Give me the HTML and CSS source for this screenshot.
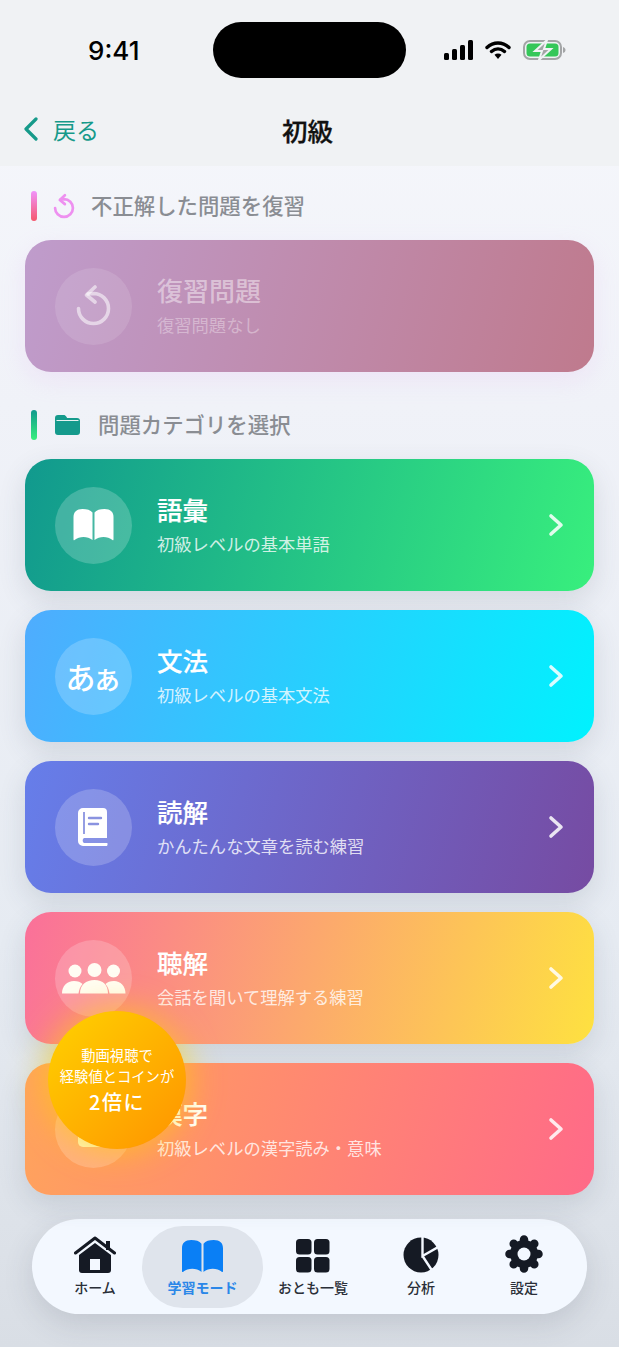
FILE: index.html
```html
<!DOCTYPE html>
<html lang="ja">
<head>
    <meta charset="UTF-8">
    <meta name="viewport" content="width=device-width, initial-scale=1.0">
    <title>初級</title>
    <link rel="stylesheet" href="styles.css">
</head>
<body>
    <header class="header">
        <div class="status-bar">
            <span class="time">9:41</span>
            <div class="island"></div>
            <div class="status-icons">
                <svg width="30" height="20" viewBox="0 0 30 20"><rect x="0" y="13" width="5" height="7" rx="1.5"/><rect x="8" y="9" width="5" height="11" rx="1.5"/><rect x="16" y="5" width="5" height="15" rx="1.5"/><rect x="24" y="0" width="5" height="20" rx="1.5"/></svg>
                <svg class="wifi" width="26" height="20" viewBox="0 0 26 20"><path d="M2 7.500C8.500 1.500 17.500 1.500 24 7.500M6.500 11.500C10.500 8 15.500 8 19.500 11.500" fill="none" stroke="#000" stroke-width="3.400" stroke-linecap="round"/><path d="M9.500 14.800C11.500 13 14.500 13 16.500 14.800L13 19Z"/></svg>
                <svg class="battery" width="43" height="22" viewBox="0 0 43 22"><rect x="1" y="2" width="37" height="18" rx="6" fill="none" stroke="#a3a5a6" stroke-width="2"/><rect x="3.500" y="4.500" width="32" height="13" rx="3.500" fill="#35c759"/><path d="M40 8v6c1.500-.5 2.500-1.500 2.500-3S41.500 8.500 40 8Z" fill="#a3a5a6"/><path d="M24 1 12 12h7L16 21 28 10h-7Z" fill="#a3a5a6" stroke="#f0f2f4" stroke-width="2"/></svg>
            </div>
        </div>
        <nav class="nav">
            <a class="back">
                <svg width="16" height="24" viewBox="0 0 16 24"><path d="M13 2 3 12l10 10" fill="none" stroke="#169a8a" stroke-width="3.200" stroke-linecap="round" stroke-linejoin="round"/></svg>
                <span>戻る</span>
            </a>
            <h1 class="nav-title">初級</h1>
            <span></span>
        </nav>
    </header>

    <main class="main">
        <div class="section-head">
            <span class="section-bar bar-pink"></span>
            <svg class="retry-small" width="22" height="27" viewBox="0 0 37 42"><path d="M13 9 18.500 8.500A15 15 0 1 1 3.500 23.500" fill="none" stroke="#ee90f0" stroke-width="4.500" stroke-linecap="round"/><path d="M20 2 11.500 10 20 17" fill="none" stroke="#ee90f0" stroke-width="4.500" stroke-linecap="round" stroke-linejoin="round"/></svg>
            <h2>不正解した問題を復習</h2>
        </div>
        <div class="card card-review">
            <div class="card-icon">
                <svg width="37" height="42" viewBox="0 0 37 42"><path d="M13 9 18.500 8.500A15 15 0 1 1 3.500 23.500" fill="none" stroke="#fff" stroke-opacity=".55" stroke-width="3.600" stroke-linecap="round"/><path d="M20 2 11.500 10 20 17" fill="none" stroke="#fff" stroke-opacity=".55" stroke-width="3.600" stroke-linecap="round" stroke-linejoin="round"/></svg>
            </div>
            <div class="card-text">
                <div class="card-title">復習問題</div>
                <div class="card-sub">復習問題なし</div>
            </div>
        </div>

        <div class="section-head section-second">
            <span class="section-bar bar-green"></span>
            <svg class="folder" width="25" height="20" viewBox="0 0 25 20"><path d="M0 3a3 3 0 0 1 3-3h5.500c1.200 0 1.800.5 2.500 1.300L12.200 3H22a3 3 0 0 1 3 3v11a3 3 0 0 1-3 3H3a3 3 0 0 1-3-3Z" fill="#159a8c"/><path d="M1.500 5.500H23.500" stroke="#e6f2f1" stroke-width="1"/></svg>
            <h2>問題カテゴリを選択</h2>
        </div>
        <div class="cards">
            <div class="card card-vocab">
                <div class="card-icon">
                    <svg width="41" height="32" viewBox="0 0 40 32"><path d="M0 8C0 3 3 0 9 0c4.500 0 8 1 10 3.500V31c-5-4-13-4-18 0-.7.600-1 0-1-1ZM21 3.500C23 1 26.500 0 31 0c6 0 9 3 9 8v22c0 1-.3 1.600-1 1-5-4-13-4-18 0Z" fill="#fff"/></svg>
                </div>
                <div class="card-text">
                    <div class="card-title">語彙</div>
                    <div class="card-sub">初級レベルの基本単語</div>
                </div>
                <svg class="chevron" width="16" height="24" viewBox="0 0 16 24"><path d="M3 3l10 9-10 9"/></svg>
            </div>
            <div class="card card-grammar">
                <div class="card-icon"><span class="kana">あぁ</span></div>
                <div class="card-text">
                    <div class="card-title">文法</div>
                    <div class="card-sub">初級レベルの基本文法</div>
                </div>
                <svg class="chevron" width="16" height="24" viewBox="0 0 16 24"><path d="M3 3l10 9-10 9"/></svg>
            </div>
            <div class="card card-reading">
                <div class="card-icon">
                    <svg class="book-icon" width="30" height="38" viewBox="0 0 30 38"><path d="M5 0h20a4 4 0 0 1 4 4v26H6a3 3 0 0 0 0 5h23c.8 0 .8 2 0 3H5a5 5 0 0 1-5-5V5a5 5 0 0 1 5-5Z" fill="#fff"/><path d="M6 4V26" stroke="#8a93e0" stroke-width="1.800"/><path d="M11 10H23M11 16H20" stroke="#8a93e0" stroke-width="2.400" stroke-linecap="round"/></svg>
                </div>
                <div class="card-text">
                    <div class="card-title">読解</div>
                    <div class="card-sub">かんたんな文章を読む練習</div>
                </div>
                <svg class="chevron" width="16" height="24" viewBox="0 0 16 24"><path d="M3 3l10 9-10 9"/></svg>
            </div>
            <div class="card card-listening">
                <div class="card-icon">
                    <svg width="64" height="31" viewBox="0 0 64 31" fill="#fffdf4"><circle cx="13" cy="8" r="6.500"/><circle cx="32.500" cy="7" r="7"/><circle cx="51.500" cy="8" r="6.500"/><path d="M0 30.500C0 23 5 18 12 18c4 0 6.500 1 8.500 3C18 24 17 27 16.500 30.500ZM63.500 30.500C63.500 23 58.500 18 52 18c-4 0-6.500 1-8.500 3 2.500 3 3.500 6 4 9.500ZM18 30.500C18 22 24 17 32.500 17S46 22 46 30.500Z"/></svg>
                </div>
                <div class="card-text">
                    <div class="card-title">聴解</div>
                    <div class="card-sub">会話を聞いて理解する練習</div>
                </div>
                <svg class="chevron" width="16" height="24" viewBox="0 0 16 24"><path d="M3 3l10 9-10 9"/></svg>
            </div>
            <div class="card card-kanji">
                <div class="card-icon">
                    <svg width="31" height="35" viewBox="0 0 31 35"><rect width="31" height="35" rx="5" fill="#fff3c4"/></svg>
                </div>
                <div class="card-text">
                    <div class="card-title">漢字</div>
                    <div class="card-sub">初級レベルの漢字読み・意味</div>
                </div>
                <svg class="chevron" width="16" height="24" viewBox="0 0 16 24"><path d="M3 3l10 9-10 9"/></svg>
            </div>
            <div class="bonus">
                <span>動画視聴で</span>
                <span>経験値とコインが</span>
                <strong>2倍に</strong>
            </div>
        </div>

        <div class="tabbar">
            <div class="tab tab-home">
                <svg width="42" height="37" viewBox="0 0 42 37"><rect x="32" y="5" width="4" height="9" fill="#151a24"/><path d="M5 19 21 7l16 12v15a3 3 0 0 1-3 3H8a3 3 0 0 1-3-3ZM16 23v11h10V23Z" fill="#151a24" fill-rule="evenodd"/><path d="M1.500 17 21 2l19.500 15" fill="none" stroke="#151a24" stroke-width="3" stroke-linecap="round" stroke-linejoin="round"/></svg>
                <span>ホーム</span>
            </div>
            <div class="tab tab-study active">
                <svg width="41" height="33" viewBox="0 0 40 32"><path d="M0 8C0 3 3 0 9 0c4.500 0 8 1 10 3.500V31c-5-4-13-4-18 0-.7.600-1 0-1-1ZM21 3.500C23 1 26.500 0 31 0c6 0 9 3 9 8v22c0 1-.3 1.600-1 1-5-4-13-4-18 0Z" fill="#0a7ff5"/></svg>
                <span>学習モード</span>
            </div>
            <div class="tab tab-list">
                <svg width="34" height="34" viewBox="0 0 34 34" fill="#151a24"><rect x="0" y="0" width="15.500" height="15.500" rx="3.500"/><rect x="18" y="0" width="15.500" height="15.500" rx="3.500"/><rect x="0" y="18" width="15.500" height="15.500" rx="3.500"/><rect x="18" y="18" width="15.500" height="15.500" rx="3.500"/></svg>
                <span>おとも一覧</span>
            </div>
            <div class="tab tab-stats">
                <svg width="36" height="36" viewBox="0 0 36 36"><circle cx="18" cy="18" r="17.500" fill="#151a24"/><path d="M19.500 0 19.500 19 36 9.500M19.500 19 30 35" fill="none" stroke="#f3f8ff" stroke-width="2.400"/></svg>
                <span>分析</span>
            </div>
            <div class="tab tab-settings">
                <svg width="38" height="38" viewBox="0 0 38 38"><g stroke="#151a24" stroke-width="8.500" stroke-linecap="round"><path d="M19 4.500V33.500M4.500 19H33.500M8.700 8.700 29.300 29.300M29.300 8.700 8.700 29.300"/></g><circle cx="19" cy="19" r="14" fill="#151a24"/><circle cx="19" cy="19" r="6.500" fill="#f3f8ff"/></svg>
                <span>設定</span>
            </div>
        </div>
    </main>
</body>
</html>
```

FILE: styles.css
```css
* {
    box-sizing: border-box;
}
html, body {
    margin: 0;
    padding: 0;
}
body {
    width: 619px;
    height: 1347px;
    overflow: hidden;
    font-family: "Noto Sans CJK JP", "Noto Sans", sans-serif;
    background: linear-gradient(180deg, #f7f8fc 0%, #f0f2f8 30%, #e6ebf2 70%, #d9dee5 100%);
}
h1, h2 {
    margin: 0;
}

/* header */
.header {
    height: 166px;
    background-color: #f0f2f4;
}
.status-bar {
    height: 100px;
    display: flex;
    align-items: center;
    padding-left: 88px;
}
.time {
    width: 125px;
    font-family: Inter, "Liberation Sans", sans-serif;
    font-size: 26px;
    font-weight: 500;
    color: #000;
}
.island {
    width: 193px;
    height: 56px;
    border-radius: 28px;
    background-color: #000;
}
.status-icons {
    margin-left: 38px;
    display: flex;
    align-items: center;
}
.wifi {
    margin-left: 11px;
}
.battery {
    margin-left: 12px;
}
.nav {
    height: 66px;
    display: grid;
    grid-template-columns: 1fr auto 1fr;
    align-items: center;
    padding: 0 27px 8px 23px;
}
.back {
    display: flex;
    align-items: center;
    gap: 14px;
    font-size: 23px;
    color: #169a8a;
}
.nav-title {
    font-size: 25.500px;
    font-weight: 500;
    -webkit-text-stroke: 0.3px #111;
    color: #111;
}

/* main */
.main {
    padding: 25px 25px 0;
}
.section-head {
    height: 30px;
    padding-left: 6px;
    display: flex;
    align-items: center;
}
.section-head h2 {
    margin-top: -3px;
    font-size: 21.400px;
    font-weight: 500;
    color: #8a8d93;
}
.section-second {
    margin-top: 38px;
}
.section-bar {
    width: 6px;
    height: 30px;
    border-radius: 3px;
}
.bar-pink {
    background: linear-gradient(180deg, #f093fb, #f5576c);
}
.bar-green {
    background: linear-gradient(180deg, #11998e, #38ef7d);
}
.retry-small {
    margin: 0 16px 0 16px;
}
.folder {
    margin: 0 18px;
}

/* cards */
.cards {
    position: relative;
}
.card {
    height: 132px;
    margin-top: 19px;
    padding: 0 30px 0 30px;
    display: flex;
    align-items: center;
    border-radius: 26px;
    box-shadow: 0 10px 28px rgba(60, 70, 90, 0.14);
}
.card-icon {
    width: 77px;
    height: 77px;
    flex: none;
    border-radius: 50%;
    background-color: rgba(255, 255, 255, 0.2);
    display: flex;
    align-items: center;
    justify-content: center;
}
.card-text {
    margin-left: 25px;
    padding-bottom: 3px;
    flex: 1;
    color: #fff;
}
.card-title {
    font-size: 25.500px;
    font-weight: 500;
    -webkit-text-stroke: 0.2px;
    line-height: 34px;
}
.card-sub {
    margin-top: 6px;
    font-size: 17.300px;
    line-height: 24px;
    color: rgba(255, 255, 255, 0.8);
}
.chevron path {
    fill: none;
    stroke: rgba(255, 255, 255, 0.85);
    stroke-width: 3.600;
    stroke-linecap: round;
    stroke-linejoin: round;
}
.card-review {
    background: linear-gradient(105deg, #bf9ccc, #bf7a8d);
    box-shadow: 0 8px 24px rgba(225, 170, 240, 0.2);
}
.card-review .card-icon {
    background-color: rgba(255, 255, 255, 0.12);
}
.card-review .card-title {
    font-size: 26px;
    color: rgba(255, 255, 255, 0.45);
    -webkit-text-stroke: 0;
}
.card-review .card-sub {
    color: rgba(255, 255, 255, 0.35);
}
.card-vocab {
    background: linear-gradient(105deg, #11998e, #38ef7d);
}
.card-grammar {
    background: linear-gradient(105deg, #4facfe, #00f2fe);
}
.card-reading {
    background: linear-gradient(105deg, #667eea, #764ba2);
}
.card-listening {
    background: linear-gradient(105deg, #fa709a, #fee140);
}
.card-kanji {
    background: linear-gradient(105deg, #ffa45c, #ff6a88);
}
.kana {
    font-size: 30px;
    font-weight: 500;
    color: #fff;
    letter-spacing: -3.500px;
    margin-left: -3px;
}
.book-icon {
    margin-left: -2px;
}

/* badge over the cards */
.bonus {
    position: absolute;
    left: 23px;
    top: 552px;
    width: 138px;
    height: 138px;
    border-radius: 50%;
    background: linear-gradient(135deg, #ffd200, #ff9300);
    box-shadow: 0 0 36px rgba(255, 210, 0, 0.7);
    display: flex;
    flex-direction: column;
    align-items: center;
    justify-content: center;
    color: #fff;
    font-size: 14.300px;
    line-height: 21px;
    font-weight: 400;
}
.bonus strong {
    margin-top: 2px;
    font-size: 20px;
    line-height: 28px;
    font-weight: 500;
    letter-spacing: 1.500px;
}

/* bottom tabs */
.tabbar {
    width: 555px;
    height: 95px;
    margin: 24px 0 0 7px;
    padding: 7px 0 6px 16px;
    display: flex;
    border-radius: 48px;
    background-color: #f3f8ff;
    box-shadow: 0 10px 30px rgba(60, 70, 90, 0.16);
}
.tab {
    display: flex;
    flex-direction: column;
    align-items: center;
    justify-content: flex-end;
    padding-bottom: 11px;
    font-size: 14px;
    font-weight: 500;
    line-height: 20px;
    color: #2a2f38;
}
.tab svg {
    margin-bottom: 4px;
}
.tab-home {
    width: 94px;
}
.tab-study {
    width: 121px;
}
.tab-list {
    width: 100px;
}
.tab-stats {
    width: 116px;
}
.tab-settings {
    width: 90px;
}
.active {
    border-radius: 41px;
    background-color: #dfe4ec;
    color: #2b87e8;
    font-weight: 700;
}
```
